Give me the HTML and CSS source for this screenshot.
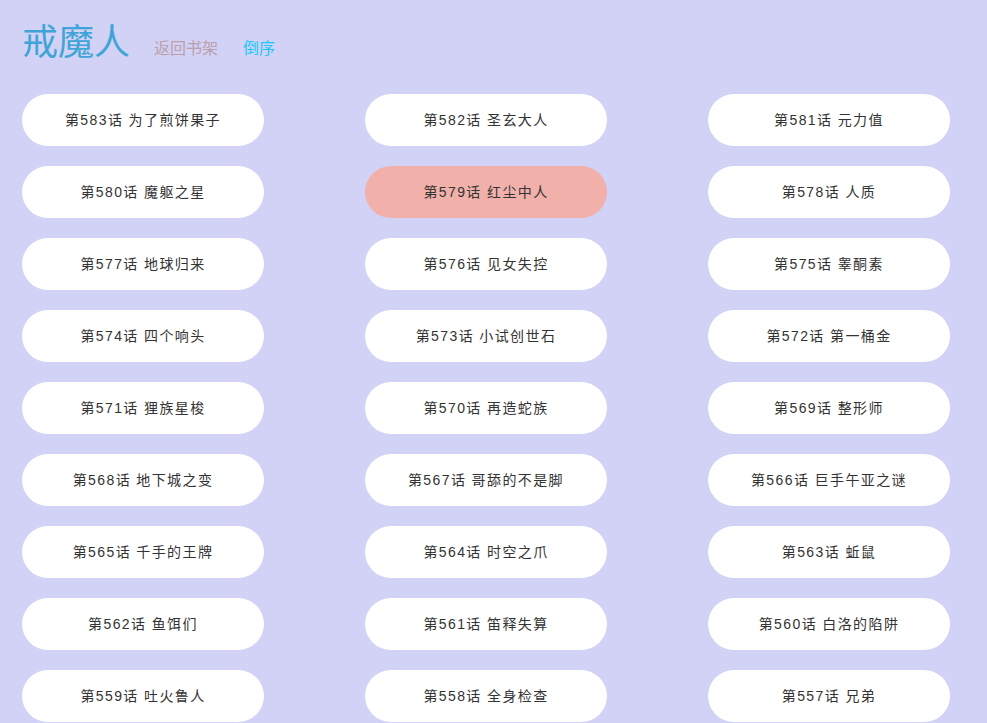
FILE: index.html
```html
<!DOCTYPE html>
<html lang="zh-CN">
<head>
<meta charset="utf-8">
<title>戒魔人</title>
<link rel="stylesheet" href="styles.css">
</head>
<body>
<header class="top">
  <h1 class="title">戒魔人</h1>
  <a class="back" href="#">返回书架</a>
  <a class="order" href="#">倒序</a>
</header>
<ul class="list">
  <li><a class="chap" href="#">第583话 为了煎饼果子</a></li>
  <li><a class="chap" href="#">第582话 圣玄大人</a></li>
  <li><a class="chap" href="#">第581话 元力值</a></li>
  <li><a class="chap" href="#">第580话 魔躯之星</a></li>
  <li><a class="chap current" href="#">第579话 红尘中人</a></li>
  <li><a class="chap" href="#">第578话 人质</a></li>
  <li><a class="chap" href="#">第577话 地球归来</a></li>
  <li><a class="chap" href="#">第576话 见女失控</a></li>
  <li><a class="chap" href="#">第575话 睾酮素</a></li>
  <li><a class="chap" href="#">第574话 四个响头</a></li>
  <li><a class="chap" href="#">第573话 小试创世石</a></li>
  <li><a class="chap" href="#">第572话 第一桶金</a></li>
  <li><a class="chap" href="#">第571话 狸族星梭</a></li>
  <li><a class="chap" href="#">第570话 再造蛇族</a></li>
  <li><a class="chap" href="#">第569话 整形师</a></li>
  <li><a class="chap" href="#">第568话 地下城之变</a></li>
  <li><a class="chap" href="#">第567话 哥舔的不是脚</a></li>
  <li><a class="chap" href="#">第566话 巨手午亚之谜</a></li>
  <li><a class="chap" href="#">第565话 千手的王牌</a></li>
  <li><a class="chap" href="#">第564话 时空之爪</a></li>
  <li><a class="chap" href="#">第563话 蚯鼠</a></li>
  <li><a class="chap" href="#">第562话 鱼饵们</a></li>
  <li><a class="chap" href="#">第561话 笛释失算</a></li>
  <li><a class="chap" href="#">第560话 白洛的陷阱</a></li>
  <li><a class="chap" href="#">第559话 吐火鲁人</a></li>
  <li><a class="chap" href="#">第558话 全身检查</a></li>
  <li><a class="chap" href="#">第557话 兄弟</a></li>
</ul>
</body>
</html>
```
FILE: styles.css
```css
html, body {
  margin: 0;
  padding: 0;
}
body {
  background: #d1d2f5;
  font-family: "Liberation Sans", "Noto Sans CJK SC", sans-serif;
  padding: 21px 22px 0;
  overflow: hidden;
}
.top {
  display: flex;
  align-items: baseline;
  gap: 24px;
  height: 44px;
}
.title {
  margin: 0;
  font-size: 36px;
  line-height: 44px;
  font-weight: normal;
  color: #3fa4d7;
}
.back, .order {
  position: relative;
  top: -1px;
  font-size: 16px;
  text-decoration: none;
}
.back {
  color: #bba0aa;
}
.order {
  margin-left: 1px;
  color: #1ec6fa;
}
.list {
  list-style: none;
  margin: 29px 0 0;
  padding: 0;
  display: grid;
  grid-template-columns: repeat(3, 242px);
  column-gap: 101px;
  row-gap: 20px;
}
.chap {
  display: flex;
  align-items: center;
  justify-content: center;
  height: 52px;
  padding-bottom: 2px;
  box-sizing: border-box;
  border-radius: 26px;
  background: #ffffff;
  color: #333333;
  font-size: 14px;
  letter-spacing: 1.4px;
  text-decoration: none;
}
.chap.current {
  background: #f2b0ab;
}
```
